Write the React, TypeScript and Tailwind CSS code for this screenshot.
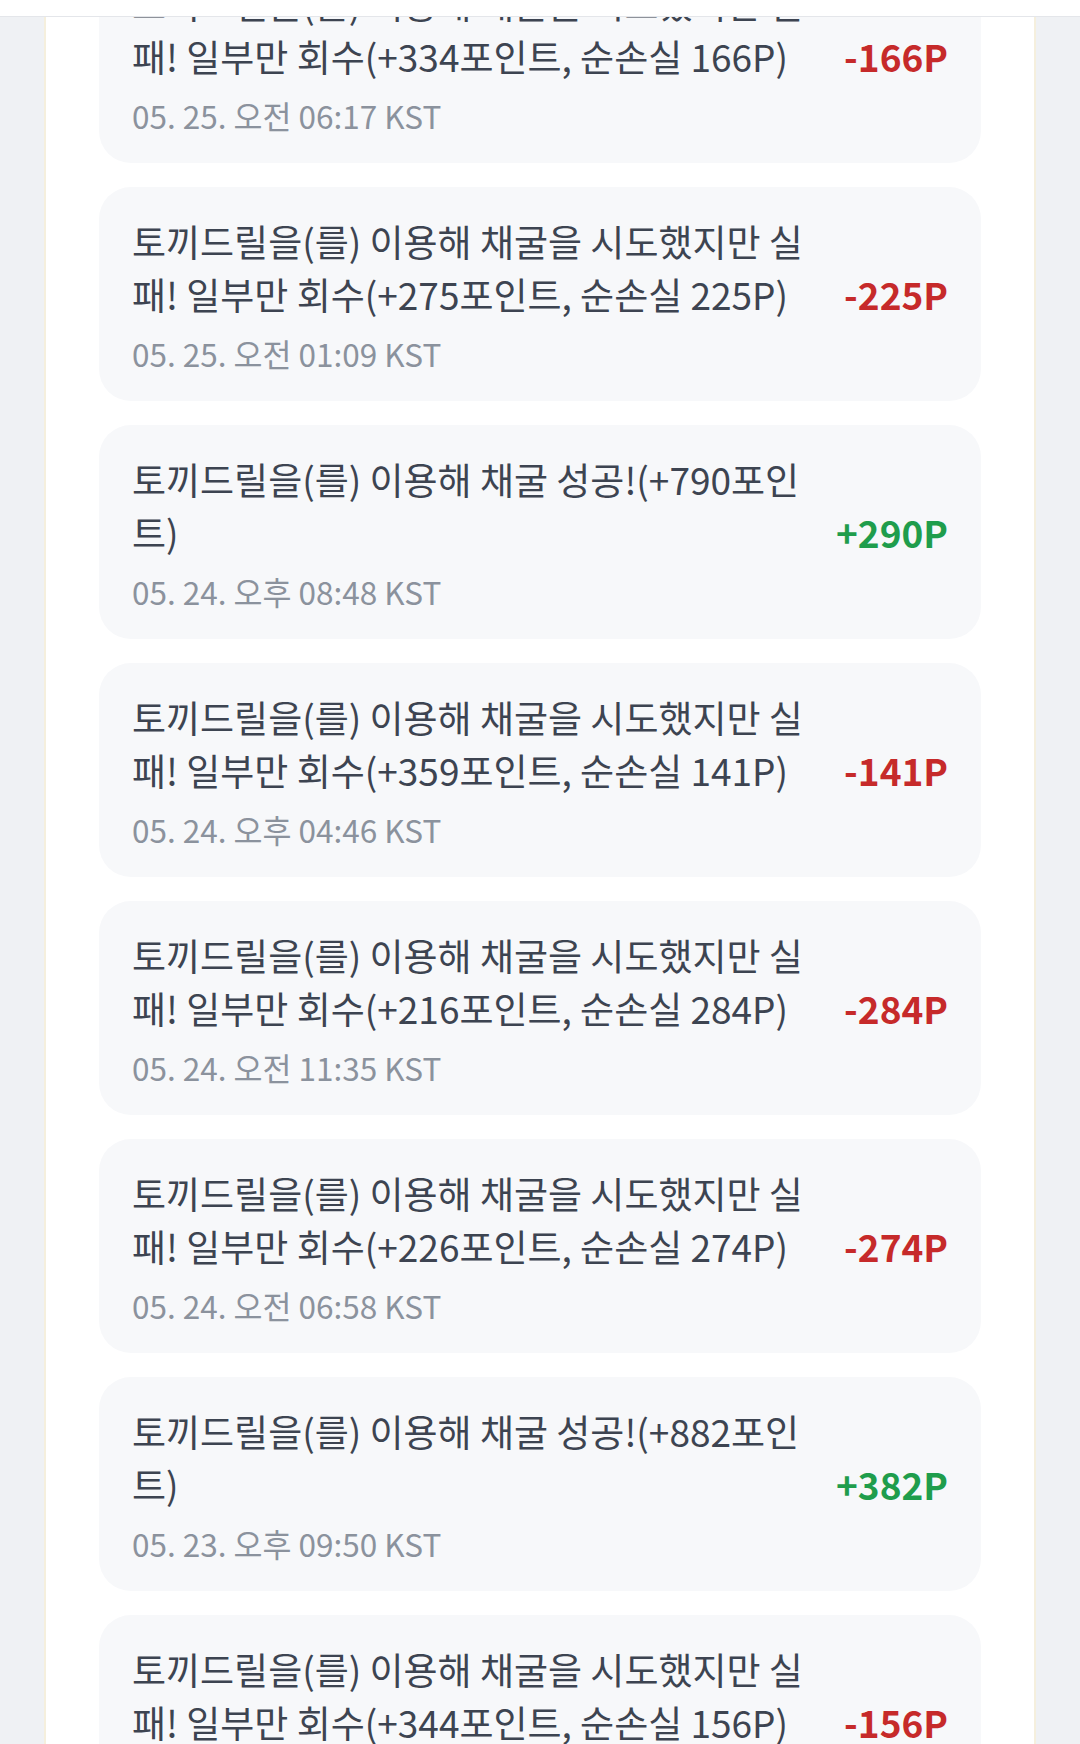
const logs = [
  { text: "토끼드릴을(를) 이용해 채굴을 시도했지만 실패! 일부만 회수(+334포인트, 순손실 166P)", amount: -166, time: "05. 25. 오전 06:17 KST" },
  { text: "토끼드릴을(를) 이용해 채굴을 시도했지만 실패! 일부만 회수(+275포인트, 순손실 225P)", amount: -225, time: "05. 25. 오전 01:09 KST" },
  { text: "토끼드릴을(를) 이용해 채굴 성공!(+790포인트)", amount: 290, time: "05. 24. 오후 08:48 KST" },
  { text: "토끼드릴을(를) 이용해 채굴을 시도했지만 실패! 일부만 회수(+359포인트, 순손실 141P)", amount: -141, time: "05. 24. 오후 04:46 KST" },
  { text: "토끼드릴을(를) 이용해 채굴을 시도했지만 실패! 일부만 회수(+216포인트, 순손실 284P)", amount: -284, time: "05. 24. 오전 11:35 KST" },
  { text: "토끼드릴을(를) 이용해 채굴을 시도했지만 실패! 일부만 회수(+226포인트, 순손실 274P)", amount: -274, time: "05. 24. 오전 06:58 KST" },
  { text: "토끼드릴을(를) 이용해 채굴 성공!(+882포인트)", amount: 382, time: "05. 23. 오후 09:50 KST" },
  { text: "토끼드릴을(를) 이용해 채굴을 시도했지만 실패! 일부만 회수(+344포인트, 순손실 156P)", amount: -156, time: "05. 23. 오후 04:12 KST" },
];

const LogCard = ({ log }: { log: (typeof logs)[number] }) => {
  const plus = log.amount > 0;
  return (
    <li className="flex items-center justify-between gap-8 rounded-[32px] bg-[#f7f8fa] px-[33px] pt-[28px] pb-[27px]">
      <div className="min-w-0 flex-1">
        <p className="text-[37px] leading-[53px] text-[#3d4451] break-all">{log.text}</p>
        <p className="mt-[11px] text-[31.5px] leading-[42px] text-[#8b929d]">{log.time}</p>
      </div>
      <span
        className={
          plus
            ? "shrink-0 text-[37px] font-bold text-[#1f9d4c]"
            : "shrink-0 text-[37px] font-bold text-[#c62a2a]"
        }
      >
        {plus ? "+" : "-"}
        {Math.abs(log.amount)}P
      </span>
    </li>
  );
};

export default function App() {
  return (
    <div
      className="h-[1744px] overflow-hidden bg-[#eff1f4]"
      style={{ fontFamily: '"Noto Sans CJK KR", "Noto Sans", sans-serif' }}
    >
      {/* top bar over the scrolled list */}
      <div className="fixed inset-x-0 top-0 z-10 h-[17px] border-b border-[#e4e6ea] bg-white" />

      <div className="mx-[44px] flow-root h-full border-x-2 border-[#f5efdd] bg-white px-[53px]">
        <ul className="-mt-[51px] flex flex-col gap-[24px]">
          {logs.map((log, i) => (
            <LogCard key={i} log={log} />
          ))}
        </ul>
      </div>
    </div>
  );
}
